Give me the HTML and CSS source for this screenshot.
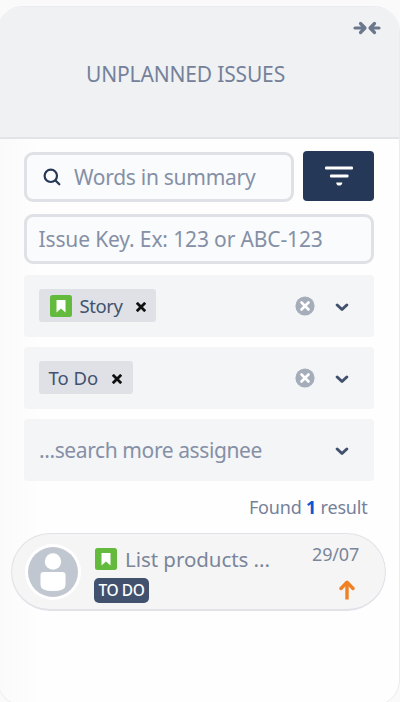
FILE: index.html
```html
<!DOCTYPE html>
<html lang="en">
<head>
    <meta charset="UTF-8">
    <meta name="viewport" content="width=device-width, initial-scale=1.0">
    <title>Unplanned Issues</title>
    <link rel="stylesheet" href="styles.css">
</head>
<body>
    <div class="panel">
        <div class="panel-header">
            <button class="collapse-btn" type="button" aria-label="Collapse">
                <svg width="28" height="14" viewBox="0 0 28 14" fill="none" stroke="#6b778c" stroke-width="3.200" stroke-linecap="round" stroke-linejoin="round">
                    <path d="M2 7h9M7.500 2.500L12 7l-4.500 4.500M26 7h-9M21.500 2.500L17 7l4.500 4.500"/>
                </svg>
            </button>
            <h1 class="title">UNPLANNED ISSUES</h1>
        </div>

        <div class="filters">
            <div class="search-row">
                <div class="field search-field">
                    <svg class="search-icon" width="18" height="18" viewBox="0 0 18 18" fill="none" stroke="#253858" stroke-width="2.200" stroke-linecap="round">
                        <circle cx="7.800" cy="7.800" r="6.200"/>
                        <path d="M12.500 12.500L16.300 16.300"/>
                    </svg>
                    <span class="placeholder words">Words in summary</span>
                </div>
                <button class="filter-btn" type="button" aria-label="Filter">
                    <svg width="28" height="20" viewBox="0 0 28 20" fill="#fff">
                        <rect x="0" y="0.500" width="28" height="3" rx="1"/>
                        <rect x="5" y="8.500" width="18.500" height="3" rx="1"/>
                        <path d="M11.500 16.500h5.500q.5 0 .2.800-.7 2.200-2 2.200h-2q-1.300 0-1.900-2.200-.3-.8.200-.8z"/>
                    </svg>
                </button>
            </div>

            <div class="field key-field">
                <span class="placeholder key">Issue Key. Ex: 123 or ABC-123</span>
            </div>

            <div class="select">
                <div class="tag">
                    <svg class="story-icon" width="22" height="22" viewBox="0 0 22 22">
                        <rect width="22" height="22" rx="2.500" fill="#63ba3c"/>
                        <path d="M6.500 5h9v12.500L11 13.500l-4.500 4z" fill="#fff"/>
                    </svg>
                    <span class="tag-text story">Story</span>
                    <svg class="remove" width="10" height="10" viewBox="0 0 10 10" stroke="#111" stroke-width="2.800">
                        <path d="M.8.800l8.400 8.400M9.200.800L.8 9.200"/>
                    </svg>
                </div>
                <svg class="clear" width="20" height="20" viewBox="0 0 20 20">
                    <circle cx="10" cy="10" r="9.600" fill="#a5adba"/>
                    <path d="M6.500 6.500l7 7M13.500 6.500l-7 7" stroke="#fff" stroke-width="2.600" stroke-linecap="round"/>
                </svg>
                <svg class="chevron" width="14" height="9" viewBox="0 0 14 9" fill="none" stroke="#42526e" stroke-width="3" stroke-linecap="round" stroke-linejoin="round">
                    <path d="M2.200 2L7 6.500 11.800 2"/>
                </svg>
            </div>

            <div class="select">
                <div class="tag">
                    <span class="tag-text todo">To Do</span>
                    <svg class="remove" width="10" height="10" viewBox="0 0 10 10" stroke="#111" stroke-width="2.800">
                        <path d="M.8.800l8.400 8.400M9.200.800L.8 9.200"/>
                    </svg>
                </div>
                <svg class="clear" width="20" height="20" viewBox="0 0 20 20">
                    <circle cx="10" cy="10" r="9.600" fill="#a5adba"/>
                    <path d="M6.500 6.500l7 7M13.500 6.500l-7 7" stroke="#fff" stroke-width="2.600" stroke-linecap="round"/>
                </svg>
                <svg class="chevron" width="14" height="9" viewBox="0 0 14 9" fill="none" stroke="#42526e" stroke-width="3" stroke-linecap="round" stroke-linejoin="round">
                    <path d="M2.200 2L7 6.500 11.800 2"/>
                </svg>
            </div>

            <div class="select">
                <span class="placeholder assignee">...search more assignee</span>
                <svg class="chevron" width="14" height="9" viewBox="0 0 14 9" fill="none" stroke="#42526e" stroke-width="3" stroke-linecap="round" stroke-linejoin="round">
                    <path d="M2.200 2L7 6.500 11.800 2"/>
                </svg>
            </div>

            <p class="found">Found <strong>1</strong> result</p>
        </div>

        <div class="issue">
            <svg class="avatar" width="56" height="56" viewBox="0 0 56 56">
                <circle cx="28" cy="28" r="28" fill="#fff"/>
                <circle cx="28" cy="28" r="25" fill="#c1c7d0"/>
                <circle cx="28" cy="17.500" r="8.200" fill="#fff"/>
                <path d="M18.500 28h19q3 0 3 3v10q0 6-12.500 6t-12.500-6V31q0-3 3-3z" fill="#fff"/>
            </svg>
            <div class="issue-main">
                <div class="issue-title">
                    <svg width="22" height="22" viewBox="0 0 22 22">
                        <rect width="22" height="22" rx="2.500" fill="#63ba3c"/>
                        <path d="M6.500 5h9v12.500L11 13.500l-4.500 4z" fill="#fff"/>
                    </svg>
                    <span class="summary">List products ...</span>
                </div>
                <span class="status">TO DO</span>
            </div>
            <div class="issue-side">
                <span class="date">29/07</span>
                <svg class="priority" width="16" height="20" viewBox="0 0 16 20" fill="none" stroke="#f08024" stroke-width="3.400" stroke-linejoin="round">
                    <path d="M8 19.500V3"/>
                    <path d="M2 8.500l6-6.200 6 6.200" stroke-linecap="round"/>
                </svg>
            </div>
        </div>
    </div>
</body>
</html>
```
FILE: styles.css
```css
* { margin: 0; padding: 0; box-sizing: border-box; }
body {
    font-family: 'Noto Sans', 'Open Sans', sans-serif;
    background: #fafafa;
    height: 702px;
    overflow: hidden;
    padding-top: 6px;
}
button {
    border: none;
    background: none;
    cursor: pointer;
}
svg {
    display: block;
    flex: none;
}
.panel {
    width: 403px;
    height: 700px;
    margin-left: -3px;
    border: 1px solid #ebecf0;
    border-radius: 26px;
    overflow: hidden;
    background: linear-gradient(90deg, #fafafa 0, #fefefe 45px);
}
.panel-header {
    height: 132px;
    background: #f0f1f3;
    border-bottom: 2px solid #e3e4ea;
    display: flex;
    flex-direction: column;
}
.collapse-btn {
    align-self: flex-end;
    margin: 14px 18px 0 0;
}
.title {
    font-size: 21px;
    font-weight: 400;
    line-height: 28px;
    letter-spacing: -0.16px;
    color: #75819a;
    margin: 25px 0 0 88px;
    white-space: nowrap;
}
.filters {
    padding: 12px 25.500px 0 26px;
    display: flex;
    flex-direction: column;
}
.search-row {
    display: flex;
    gap: 9px;
}
.field {
    display: flex;
    align-items: center;
    height: 50px;
    border: 3px solid #dfe1e6;
    border-radius: 9px;
    background: #fafbfc;
}
.search-field {
    width: 270px;
    padding-left: 16px;
    gap: 13px;
    margin-top: 1px;
}
.key-field {
    margin-top: 12px;
    margin-bottom: 1px;
    padding-left: 11.500px;
}
.placeholder {
    font-size: 21px;
    color: #8590a6;
    white-space: nowrap;
}
.words {
    letter-spacing: -0.28px;
}
.key {
    letter-spacing: -0.14px;
}
.filter-btn {
    flex: 1;
    height: 50px;
    padding-left: 2px;
    display: flex;
    align-items: center;
    justify-content: center;
    background: #253858;
    border-radius: 4px;
}
.select {
    display: flex;
    align-items: center;
    height: 62px;
    margin-top: 10px;
    padding: 0 25px 0 15px;
    border-radius: 4px;
    background: #f4f5f7;
}
.tag {
    display: flex;
    align-items: center;
    height: 33px;
    padding: 0 10.500px;
    margin-bottom: 1px;
    border-radius: 3px;
    background: #dfe1e6;
}
.tag-text {
    font-size: 18.500px;
    color: #42526e;
    white-space: nowrap;
}
.story {
    letter-spacing: -0.4px;
}
.todo {
    margin-left: -1px;
    margin-right: 1px;
}
.story-icon {
    margin-right: 8px;
}
.remove {
    margin-left: 13px;
    margin-top: 2px;
}
.clear {
    margin-left: auto;
    margin-right: 20px;
}
.chevron {
    margin-top: 2px;
}
.assignee {
    margin-right: auto;
    letter-spacing: -0.4px;
}
.found {
    margin-top: 14px;
    margin-right: 6px;
    font-size: 18px;
    line-height: 25px;
    letter-spacing: -0.2px;
    color: #75819a;
    text-align: right;
}
.found strong {
    color: #0b58d0;
}
.issue {
    display: flex;
    width: 375px;
    height: 78px;
    margin: 13px 0 0 13px;
    padding: 0 26px 0 13px;
    border: 1px solid #e1e2e8;
    border-bottom-width: 2px;
    border-radius: 39px;
    background: #f5f5f5;
}
.avatar {
    margin-top: 10px;
}
.issue-main {
    margin-left: 13px;
    padding-top: 12px;
}
.issue-title {
    display: flex;
    align-items: center;
    height: 26px;
    gap: 8px;
    margin-left: 1px;
}
.summary {
    font-size: 20.500px;
    letter-spacing: -0.05px;
    color: #7a869a;
    white-space: nowrap;
}
.status {
    display: flex;
    align-items: center;
    justify-content: center;
    width: 55px;
    height: 25px;
    margin-top: 6px;
    padding-bottom: 1px;
    border-radius: 5px;
    background: #42526e;
    color: #fff;
    font-size: 15.500px;
    font-weight: 500;
    letter-spacing: -0.4px;
    white-space: nowrap;
}
.issue-side {
    margin-left: auto;
    padding-top: 8px;
    display: flex;
    flex-direction: column;
    align-items: flex-end;
}
.date {
    font-size: 18px;
    line-height: 24px;
    letter-spacing: -0.2px;
    color: #7a869a;
}
.priority {
    margin: 14px 4px 0 0;
}
```
